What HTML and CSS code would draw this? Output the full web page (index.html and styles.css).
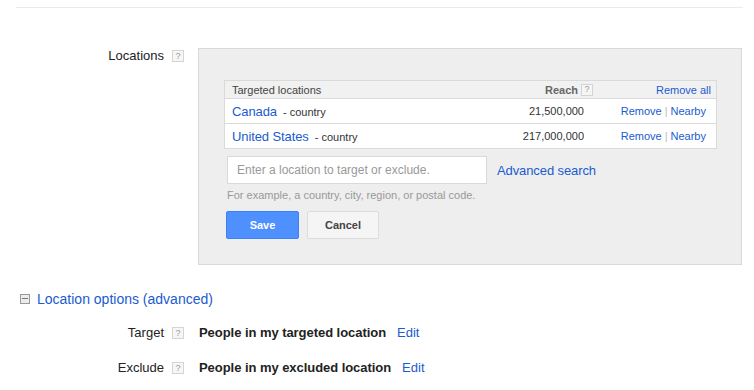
FILE: index.html
```html
<!DOCTYPE html>
<html>
<head>
<meta charset="utf-8">
<link rel="stylesheet" href="styles.css">
</head>
<body>
<div class="divider"></div>

<div class="loc-row">
  <div class="label-col"><span class="label">Locations</span><span class="help">?</span></div>
  <div class="panel">
    <div class="table">
      <div class="thead">
        <div class="c-loc">Targeted locations</div>
        <div class="c-reach h-reach">Reach <span class="help">?</span></div>
        <div class="c-act h-act"><a class="link">Remove all</a></div>
      </div>
      <div class="trow">
        <div class="c-loc"><a class="loc-link">Canada</a><span class="type">- country</span></div>
        <div class="c-reach">21,500,000</div>
        <div class="c-act"><a class="link">Remove</a><span class="sep">|</span><a class="link">Nearby</a></div>
      </div>
      <div class="trow">
        <div class="c-loc"><a class="loc-link">United States</a><span class="type">- country</span></div>
        <div class="c-reach">217,000,000</div>
        <div class="c-act"><a class="link">Remove</a><span class="sep">|</span><a class="link">Nearby</a></div>
      </div>
    </div>
    <div class="search-row">
      <div class="input">Enter a location to target or exclude.</div>
      <a class="adv">Advanced search</a>
    </div>
    <div class="hint">For example, a country, city, region, or postal code.</div>
    <div class="buttons">
      <div class="btn save">Save</div>
      <div class="btn cancel">Cancel</div>
    </div>
  </div>
</div>

<div class="options">
  <span class="minus"></span><a class="opt-link">Location options (advanced)</a>
</div>

<div class="opt-row first">
  <div class="label-col"><span class="label">Target</span><span class="help">?</span></div>
  <span class="value">People in my targeted location</span><a class="edit">Edit</a>
</div>
<div class="opt-row">
  <div class="label-col"><span class="label">Exclude</span><span class="help">?</span></div>
  <span class="value">People in my excluded location</span><a class="edit">Edit</a>
</div>
</body>
</html>
```

FILE: styles.css
```css
* { box-sizing: border-box; }
body {
  margin: 0;
  font-family: "Liberation Sans", Arial, sans-serif;
  color: #222;
  background: #fff;
}
a { cursor: pointer; }
.divider {
  margin: 7px 0 0 16px;
  width: 727px;
  height: 1px;
  background: #ebebeb;
}
.loc-row {
  display: flex;
  align-items: flex-start;
  margin-top: 40px;
}
.label-col {
  width: 184px;
  display: flex;
  justify-content: flex-end;
  align-items: center;
  height: 16px;
  flex-shrink: 0;
}
.label {
  font-size: 13px;
  line-height: 16px;
  color: #222;
}
.help {
  display: inline-flex;
  align-items: center;
  justify-content: center;
  width: 12px;
  height: 12px;
  margin-left: 8px;
  border: 1px solid #d4d4d4;
  background: #f6f6f6;
  color: #999;
  font-size: 9px;
  line-height: 1;
  font-weight: normal;
}
.panel {
  margin-left: 14px;
  width: 544px;
  background: #eeeeee;
  border: 1px solid #d9d9d9;
  padding: 31px 24px 25px 25px;
}
.table {
  border: 1px solid #dadada;
  background: #fff;
}
.thead, .trow {
  display: flex;
  align-items: center;
}
.thead {
  height: 17px;
  background: #f1f1f1;
  font-size: 11px;
  color: #444;
}
.trow {
  height: 25px;
  border-top: 1px solid #dadada;
  font-size: 11px;
  color: #333;
}
.c-loc {
  flex: 1;
  padding-left: 7px;
  display: flex;
  align-items: baseline;
}
.c-reach {
  width: 150px;
  text-align: right;
  padding-right: 10px;
}
.h-reach {
  display: flex;
  justify-content: flex-end;
  align-items: center;
  padding-right: 1px;
  font-weight: bold;
  color: #666;
}
.h-reach .help { margin-left: 3px; }
.c-act {
  width: 122px;
  text-align: right;
  padding-right: 10px;
}
.h-act { padding-right: 5px; }
.link { color: #1a5bd0; }
.sep { color: #bbb; margin: 0 3px; }
.loc-link {
  font-size: 13px;
  color: #1a5bd0;
  letter-spacing: -0.1px;
}
.type {
  margin-left: 6px;
  font-size: 11px;
  color: #333;
}
.search-row {
  display: flex;
  align-items: center;
  margin: 7px 0 0 3px;
}
.input {
  width: 260px;
  height: 28px;
  border: 1px solid #d9d9d9;
  background: #fff;
  padding-left: 9px;
  font-size: 12px;
  line-height: 26px;
  color: #999;
}
.adv {
  margin-left: 10px;
  font-size: 13px;
  line-height: 15px;
  color: #1a5bd0;
  letter-spacing: -0.1px;
}
.hint {
  margin: 4px 0 0 3px;
  font-size: 11px;
  line-height: 14px;
  color: #999;
}
.buttons {
  display: flex;
  gap: 8px;
  margin: 9px 0 0 2px;
}
.btn {
  height: 28px;
  display: flex;
  align-items: center;
  justify-content: center;
  font-size: 11px;
  font-weight: bold;
  border-radius: 2px;
}
.save {
  width: 73px;
  background: #4d90fe;
  border: 1px solid #3b82f6;
  color: #fff;
}
.cancel {
  width: 72px;
  background: #f5f5f5;
  border: 1px solid #dcdcdc;
  color: #444;
}
.options {
  display: flex;
  align-items: center;
  margin: 26px 0 0 20px;
  height: 16px;
}
.minus {
  position: relative;
  width: 10px;
  height: 10px;
  border: 1px solid #999;
  background: #ececec;
}
.minus::after {
  content: "";
  position: absolute;
  left: 1px;
  right: 1px;
  top: 3px;
  height: 1px;
  background: #777;
}
.opt-link {
  margin-left: 7px;
  font-size: 14px;
  line-height: 16px;
  color: #1a5bd0;
}
.opt-row {
  display: flex;
  align-items: center;
  height: 16px;
  margin-top: 19px;
}
.opt-row.first { margin-top: 18px; }
.value {
  margin-left: 15px;
  font-size: 13px;
  line-height: 16px;
  font-weight: bold;
  color: #222;
  letter-spacing: -0.05px;
}
.edit {
  margin-left: 11px;
  font-size: 13px;
  line-height: 16px;
  color: #1a5bd0;
}
```
